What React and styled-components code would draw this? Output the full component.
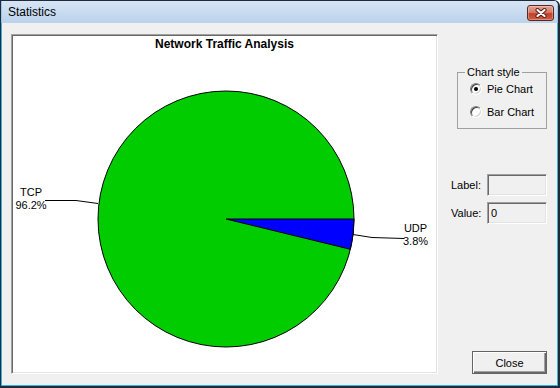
import styled, { createGlobalStyle } from "styled-components";

const Global = createGlobalStyle`
  html, body { margin: 0; padding: 0; background: #fff; }
  body { font-family: "Liberation Sans", Arial, sans-serif; font-size: 11px; color: #000; }
  * { box-sizing: border-box; }
`;

// pie geometry (svg coords)
const CX = 213;
const CY = 168;
const R = 128;
const udpShare = 0.038;

function polar(angle) {
  return [CX + R * Math.cos(angle), CY + R * Math.sin(angle)];
}

function PieChart() {
  const end = polar(udpShare * Math.PI * 2);
  return (
    <svg width="423" height="320" viewBox="0 0 423 320">
      <circle cx={CX} cy={CY} r={R} fill="#00cc00" stroke="#000" strokeWidth="1" />
      <path
        d={`M${CX},${CY} L${CX + R},${CY} A${R},${R} 0 0 1 ${end[0].toFixed(1)},${end[1].toFixed(1)} Z`}
        fill="#0000ff"
        stroke="#000"
        strokeWidth="1"
      />
      <polyline points="32,149.5 63,149.5 85,152.5" fill="none" stroke="#000" strokeWidth="1" />
      <polyline points="340,183.5 359,186.5 391,187.5" fill="none" stroke="#000" strokeWidth="1" />
      <g fontFamily="Liberation Sans, Arial, sans-serif" fontSize="11" fill="#000" textAnchor="middle">
        <text x="18" y="145">TCP</text>
        <text x="18" y="158">96.2%</text>
        <text x="402.5" y="181">UDP</text>
        <text x="402.5" y="194">3.8%</text>
      </g>
    </svg>
  );
}

function App() {
  return (
    <>
      <Global />
      <Window>
        <TitleBar>
          <Caption>Statistics</Caption>
          <CloseX>
            <svg width="14" height="10" viewBox="0 0 14 10">
              <path d="M3.5,2 L10.5,8 M10.5,2 L3.5,8" stroke="#5a1e16" strokeWidth="4.2" strokeLinecap="round" />
              <path d="M3.5,2 L10.5,8 M10.5,2 L3.5,8" stroke="#fff" strokeWidth="2.2" strokeLinecap="round" />
            </svg>
          </CloseX>
        </TitleBar>
        <Body>
          <ChartPanel>
            <ChartTitle>Network Traffic Analysis</ChartTitle>
            <PieChart />
          </ChartPanel>
          <Side>
            <GroupBox>
              <Legend>Chart style</Legend>
              <RadioRow $first>
                <Radio $checked />
                <span>Pie Chart</span>
              </RadioRow>
              <RadioRow>
                <Radio />
                <span>Bar Chart</span>
              </RadioRow>
            </GroupBox>
            <Fields>
              <FieldRow>
                <span>Label:</span>
                <Field readOnly value="" />
              </FieldRow>
              <FieldRow>
                <span>Value:</span>
                <Field readOnly value="0" />
              </FieldRow>
            </Fields>
            <Button>Close</Button>
          </Side>
        </Body>
      </Window>
    </>
  );
}

export default App;

const Window = styled.div`
  width: 560px;
  height: 388px;
  display: flex;
  flex-direction: column;
  border-style: solid;
  border-color: #1f2b38;
  border-width: 1px 2px 2px 1px;
  border-top-right-radius: 6px;
  overflow: hidden;
`;

const TitleBar = styled.div`
  height: 22px;
  flex: none;
  display: flex;
  justify-content: space-between;
  align-items: flex-start;
  padding: 0 3px 0 6px;
  background: linear-gradient(#d7e5f5, #bad2eb);
  border-left: 1px solid #9ec4e8;
  border-right: 1px solid #9ec4e8;
`;

const Caption = styled.div`
  font-size: 12px;
  line-height: 22px;
  color: #000;
`;

const CloseX = styled.div`
  margin-top: 4px;
  width: 27px;
  height: 16px;
  display: flex;
  align-items: center;
  justify-content: center;
  border: 1px solid #5e251d;
  border-radius: 3px;
  background: linear-gradient(#e3a293 0%, #d77a66 45%, #c1412b 55%, #cf5e43 100%);
  box-shadow: inset 0 0 0 1px rgba(255, 255, 255, 0.3);
`;

const Body = styled.div`
  flex: 1;
  display: flex;
  background: #f0f0f0;
  border: 1px solid #3bb2e6;
  border-top: none;
  padding: 11px 10px 11px 9px;
`;

const ChartPanel = styled.div`
  width: 427px;
  height: 340px;
  flex: none;
  display: flex;
  flex-direction: column;
  padding: 1px;
  background: #fff;
  border: 1px solid;
  border-color: #a0a0a0 #fff #fff #a0a0a0;
  box-shadow: inset 1px 1px #696969, inset -1px -1px #e3e3e3;
  overflow: hidden;
`;

const ChartTitle = styled.div`
  font-size: 12px;
  font-weight: bold;
  line-height: 14px;
  padding-top: 1px;
  text-align: center;
`;

const Side = styled.div`
  flex: 1;
  display: flex;
  flex-direction: column;
  align-items: flex-end;
`;

const GroupBox = styled.fieldset`
  margin: 32px 0 0;
  padding: 0;
  width: 90px;
  height: 63px;
  border: 1px solid #a0a0a0;
  min-width: 0;
`;

const Legend = styled.legend`
  margin-left: 7px;
  padding: 0 2px;
  font-size: 11px;
  line-height: 12px;
`;

const RadioRow = styled.div`
  display: flex;
  align-items: center;
  gap: 5px;
  height: 14px;
  margin: ${(p) => (p.$first ? "4px" : "9px")} 0 0 12px;
`;

const Radio = styled.span`
  width: 12px;
  height: 12px;
  border-radius: 50%;
  background: #fff;
  border: 1px solid;
  border-color: #808080 #fff #fff #808080;
  box-shadow: inset 1px 1px #404040, inset -1px -1px #d4d0c8;
  display: flex;
  align-items: center;
  justify-content: center;
  &::after {
    content: "";
    width: 4px;
    height: 4px;
    border-radius: 50%;
    background: ${(p) => (p.$checked ? "#000" : "transparent")};
  }
`;

const Fields = styled.div`
  margin-top: 45px;
  display: flex;
  flex-direction: column;
  gap: 6px;
`;

const FieldRow = styled.label`
  width: 96px;
  display: flex;
  align-items: center;
  justify-content: space-between;
`;

const Field = styled.input`
  width: 60px;
  height: 22px;
  padding: 0 0 0 3px;
  margin: 0;
  font-family: "Liberation Sans", Arial, sans-serif;
  font-size: 11px;
  color: #000;
  background: #f0f0f0;
  border: 1px solid;
  border-color: #a0a0a0 #fff #fff #a0a0a0;
  box-shadow: inset 1px 1px #696969, inset -1px -1px #e3e3e3;
  outline: none;
`;

const Button = styled.button`
  margin-top: auto;
  width: 75px;
  height: 23px;
  padding: 0;
  font-family: "Liberation Sans", Arial, sans-serif;
  font-size: 11px;
  color: #000;
  background: #f0f0f0;
  border: 1px solid #646464;
  box-shadow: inset 1px 1px #fff, inset -1px -1px #696969, inset -2px -2px #a0a0a0;
`;
